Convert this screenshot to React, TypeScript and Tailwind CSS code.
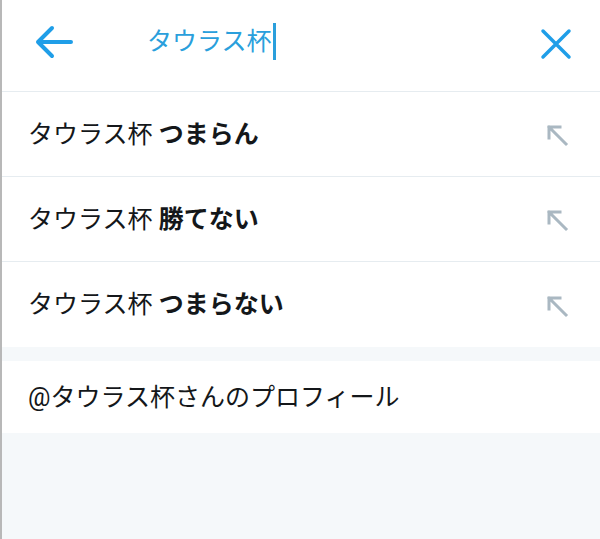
import React from "react";

const FONT = { fontFamily: "Roboto, 'Noto Sans CJK JP', 'Noto Sans', sans-serif" };

const suggestions = [
  { base: "タウラス杯", rest: "つまらん" },
  { base: "タウラス杯", rest: "勝てない" },
  { base: "タウラス杯", rest: "つまらない" },
];

function BackArrow() {
  return (
    <svg width="40" height="36" viewBox="0 0 40 36" className="ml-8 shrink-0">
      <path
        d="M37 18H4M18 4L4 18l14 14"
        fill="none"
        stroke="#1f9ee8"
        strokeWidth="4"
        strokeLinecap="round"
        strokeLinejoin="round"
      />
    </svg>
  );
}

function CloseIcon() {
  return (
    <svg width="32" height="32" viewBox="0 0 32 32" className="mr-7 shrink-0 mt-1">
      <path
        d="M3 3l26 26M29 3L3 29"
        fill="none"
        stroke="#1f9ee8"
        strokeWidth="3.5"
        strokeLinecap="round"
      />
    </svg>
  );
}

function FillArrow() {
  return (
    <svg width="24" height="24" viewBox="0 0 24 24" className="shrink-0 mt-1">
      <path
        d="M3 3l17 17M3 3h11M3 3v11"
        fill="none"
        stroke="#aab8c2"
        strokeWidth="3"
        strokeLinecap="square"
      />
    </svg>
  );
}

export default function App() {
  return (
    <div
      className="w-[600px] h-[539px] bg-[#f5f8fa] border-l-2 border-[#b8b8b8] flex flex-col overflow-hidden"
      style={FONT}
    >
      <div className="h-[92px] shrink-0 bg-white border-b border-[#e6ecf0] flex items-center pb-2">
        <BackArrow />
        <div className="ml-[73px] flex items-center flex-1">
          <span className="text-[25px] leading-none text-[#2a9fdc]">タウラス杯</span>
          <span className="ml-[1px] w-[3px] h-[37px] bg-[#2a9fdc]" />
        </div>
        <CloseIcon />
      </div>

      {suggestions.map((s, i) => (
        <div
          key={i}
          className={`h-[85px] shrink-0 bg-white flex items-center pl-[26px] pr-[30px] ${
            i < suggestions.length - 1 ? "border-b border-[#e6ecf0]" : ""
          }`}
        >
          <p className="flex-1 text-[25px] leading-none text-[#14171a]">
            {s.base} <span className="font-semibold">{s.rest}</span>
          </p>
          <FillArrow />
        </div>
      ))}

      <div className="h-[14px] shrink-0" />

      <div className="h-[72px] shrink-0 bg-white flex items-center pl-[26px]">
        <p className="text-[25px] leading-none text-[#14171a]">@タウラス杯さんのプロフィール</p>
      </div>
    </div>
  );
}
